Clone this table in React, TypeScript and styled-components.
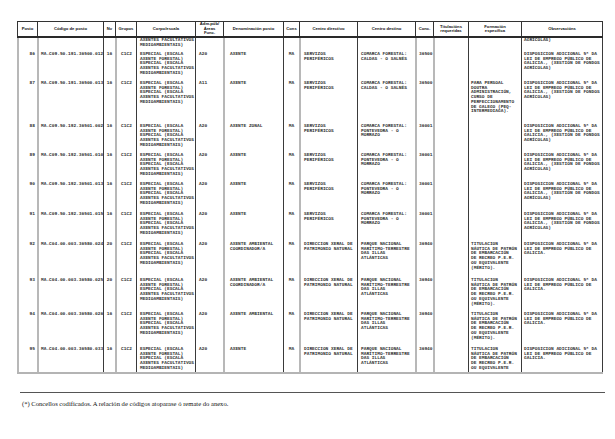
import styled, { createGlobalStyle } from 'styled-components';

const GlobalStyle = createGlobalStyle`
  body {
    margin: 0;
    background: #ffffff;
  }
`;

type Line = 'light' | 'dark';
type Align = 'left' | 'center' | 'right';

interface Column {
  w: number;
  align: Align;
  line: Line;
  pad: number;
}

const columns: Column[] = [
  { w: 20, align: 'right', line: 'light', pad: 2 },
  { w: 66, align: 'left', line: 'light', pad: 2 },
  { w: 12, align: 'center', line: 'dark', pad: 0 },
  { w: 21, align: 'center', line: 'light', pad: 0 },
  { w: 59, align: 'left', line: 'dark', pad: 3 },
  { w: 28, align: 'left', line: 'dark', pad: 3 },
  { w: 60, align: 'left', line: 'light', pad: 5 },
  { w: 16, align: 'center', line: 'dark', pad: 0 },
  { w: 58, align: 'left', line: 'light', pad: 3 },
  { w: 58, align: 'left', line: 'dark', pad: 3 },
  { w: 18, align: 'left', line: 'light', pad: 2 },
  { w: 35, align: 'left', line: 'light', pad: 2 },
  { w: 53, align: 'left', line: 'dark', pad: 2 },
  { w: 82, align: 'left', line: 'dark', pad: 2 },
];

const gridCols = columns.map((c) => `${c.w}px`).join(' ');

const headers = [
  ['Posto'],
  ['Código de posto'],
  ['Nv'],
  ['Grupos'],
  ['Corpo/escala'],
  ['Adm.púb/', 'Áreas', 'Func.'],
  ['Denominación posto'],
  ['Cons'],
  ['Centro directivo'],
  ['Centro destino'],
  ['Conc.'],
  ['Titulacións', 'requeridas'],
  ['Formación', 'específica'],
  ['Observacións'],
];

const corpo = [
  'ESPECIAL (ESCALA',
  'AXENTE FORESTAL)',
  'ESPECIAL (ESCALA',
  'AXENTES FACULTATIVOS',
  'MEDIOAMBIENTAIS)',
];
const obsLong = [
  'DISPOSICIÓN ADICIONAL 5ª DA',
  'LEI DE EMPREGO PÚBLICO DE',
  'GALICIA., (XESTIÓN DE FONDOS',
  'AGRÍCOLAS)',
];
const obsShort = ['DISPOSICIÓN ADICIONAL 5ª DA', 'LEI DE EMPREGO PÚBLICO DE', 'GALICIA.'];
const servizos = ['SERVIZOS', 'PERIFÉRICOS'];
const caldas = ['COMARCA FORESTAL:', 'CALDAS - O SALNÉS'];
const morrazo = ['COMARCA FORESTAL:', 'PONTEVEDRA - O', 'MORRAZO'];
const dxpn = ['DIRECCIÓN XERAL DE', 'PATRIMONIO NATURAL'];
const parque = ['PARQUE NACIONAL', 'MARÍTIMO-TERRESTRE', 'DAS ILLAS', 'ATLÁNTICAS'];
const nautica = [
  'TITULACIÓN',
  'NÁUTICA DE PATRÓN',
  'DE EMBARCACIÓN',
  'DE RECREO P.E.R.',
  'OU EQUIVALENTE',
  '(MÉRITO).',
];

interface Row {
  h: number;
  cells: string[][];
}

const row = (
  h: number,
  posto: string,
  codigo: string,
  nv: string,
  adm: string,
  denom: string[],
  directivo: string[],
  destino: string[],
  conc: string,
  formacion: string[],
  obs: string[]
): Row => ({
  h,
  cells: [
    [posto],
    [codigo],
    [nv],
    ['C1C2'],
    corpo,
    [adm],
    denom,
    ['MA'],
    directivo,
    destino,
    [conc],
    [],
    formacion,
    obs,
  ],
});

const rows: Row[] = [
  {
    h: 14,
    cells: [[], [], [], [], ['AXENTES FACULTATIVOS', 'MEDIOAMBIENTAIS)'], [], [], [], [], [], [], [], [], ['AGRÍCOLAS)']],
  },
  row(29, '86', 'MA.C09.50.191.36500.012', '16', 'A20', ['AXENTE'], servizos, caldas, '36500', [], obsLong),
  row(
    43,
    '87',
    'MA.C09.50.191.36500.013',
    '16',
    'A11',
    ['AXENTE'],
    servizos,
    caldas,
    '36500',
    ['PARA PERSOAL', 'DOUTRA', 'ADMINISTRACIÓN,', 'CURSO DE', 'PERFECCIONAMENTO', 'DE GALEGO (PEQ-', 'INTERMEDIAGA).'],
    obsLong
  ),
  row(29, '88', 'MA.C09.50.192.36501.002', '16', 'A20', ['AXENTE ZONAL'], servizos, morrazo, '36001', [], obsLong),
  row(29, '89', 'MA.C09.50.192.36501.010', '16', 'A20', ['AXENTE'], servizos, morrazo, '36001', [], obsLong),
  row(30, '90', 'MA.C09.50.192.36501.013', '16', 'A20', ['AXENTE'], servizos, morrazo, '36001', [], obsLong),
  row(30, '91', 'MA.C09.50.192.36501.015', '16', 'A20', ['AXENTE'], servizos, morrazo, '36001', [], obsLong),
  row(36, '92', 'MA.C04.00.003.36580.024', '20', 'A20', ['AXENTE AMBIENTAL', 'COORDINADOR/A'], dxpn, parque, '36940', nautica, obsShort),
  row(34, '93', 'MA.C04.00.003.36580.025', '20', 'A20', ['AXENTE AMBIENTAL', 'COORDINADOR/A'], dxpn, parque, '36940', nautica, obsShort),
  row(35, '94', 'MA.C04.00.003.36580.026', '16', 'A20', ['AXENTE AMBIENTAL'], dxpn, parque, '36940', nautica, obsShort),
  // the page ends here: the last line of this row runs onto the next page
  row(25, '95', 'MA.C04.00.003.36580.033', '16', 'A20', ['AXENTE'], dxpn, parque, '36940', nautica.slice(0, 5), obsShort),
];

const Page = styled.div`
  width: 615px;
  height: 439px;
  overflow: hidden;
  padding-top: 21px;
  box-sizing: border-box;
`;

const Table = styled.div`
  margin-left: 17px;
  width: 586px;
  border-bottom: 2px solid #b4b4b4;
`;

const HeaderRow = styled.div`
  display: grid;
  grid-template-columns: ${gridCols};
  height: 17px;
  border-top: 1px solid #333;
  border-bottom: 2px solid #2a2a2a;
  box-sizing: border-box;
`;

const HeadCell = styled.div<{ $last: boolean }>`
  display: flex;
  flex-direction: column;
  justify-content: center;
  align-items: center;
  border-left: 1px solid #333;
  border-right: ${(p) => (p.$last ? '1px solid #333' : 'none')};
  font-family: 'Liberation Sans', Arial, sans-serif;
  font-weight: 700;
  font-size: 4.2px;
  line-height: 4.4px;
  color: #111;
  text-align: center;
  white-space: nowrap;
`;

const BodyRow = styled.div<{ $h: number }>`
  display: grid;
  grid-template-columns: ${gridCols};
  height: ${(p) => p.$h}px;
  overflow: hidden;
`;

const Cell = styled.div<{ $line: Line; $align: Align; $pad: number; $last: boolean }>`
  box-sizing: border-box;
  border-left: ${(p) => (p.$line === 'light' ? '2px solid #b8b8b8' : '1px solid #3a3a3a')};
  border-right: ${(p) => (p.$last ? '1px solid #3a3a3a' : 'none')};
  padding: 1px ${(p) => (p.$align === 'right' ? p.$pad : 0)}px 0 ${(p) => (p.$align === 'left' ? p.$pad : 0)}px;
  text-align: ${(p) => p.$align};
  font-family: 'Liberation Mono', 'Courier New', monospace;
  font-weight: 700;
  font-size: 4.5px;
  line-height: 4.7px;
  color: #333;
  text-rendering: geometricPrecision;
  overflow: hidden;
`;

const TextLine = styled.div`
  white-space: nowrap;
`;

const Footnote = styled.div`
  margin: 18px 0 0 20px;
  width: 585px;
  border-top: 1px solid #555;
  padding-top: 7px;
  font-family: 'Liberation Serif', 'Times New Roman', serif;
  font-size: 6.6px;
  line-height: 7px;
  color: #111;
`;

const FootText = styled.div`
  margin-left: 2px;
`;

export default function App() {
  const last = columns.length - 1;
  return (
    <Page>
      <GlobalStyle />
      <Table>
        <HeaderRow>
          {headers.map((lines, i) => (
            <HeadCell key={i} $last={i === last}>
              {lines.map((l) => (
                <div key={l}>{l}</div>
              ))}
            </HeadCell>
          ))}
        </HeaderRow>
        {rows.map((r, ri) => (
          <BodyRow key={ri} $h={r.h}>
            {r.cells.map((lines, ci) => (
              <Cell
                key={ci}
                $line={columns[ci].line}
                $align={columns[ci].align}
                $pad={columns[ci].pad}
                $last={ci === last}
              >
                {lines.map((l, li) => (
                  <TextLine key={li}>{l}</TextLine>
                ))}
              </Cell>
            ))}
          </BodyRow>
        ))}
      </Table>
      <Footnote>
        <FootText>(*) Concellos codificados. A relación de códigos atoparase ó remate do anexo.</FootText>
      </Footnote>
    </Page>
  );
}
